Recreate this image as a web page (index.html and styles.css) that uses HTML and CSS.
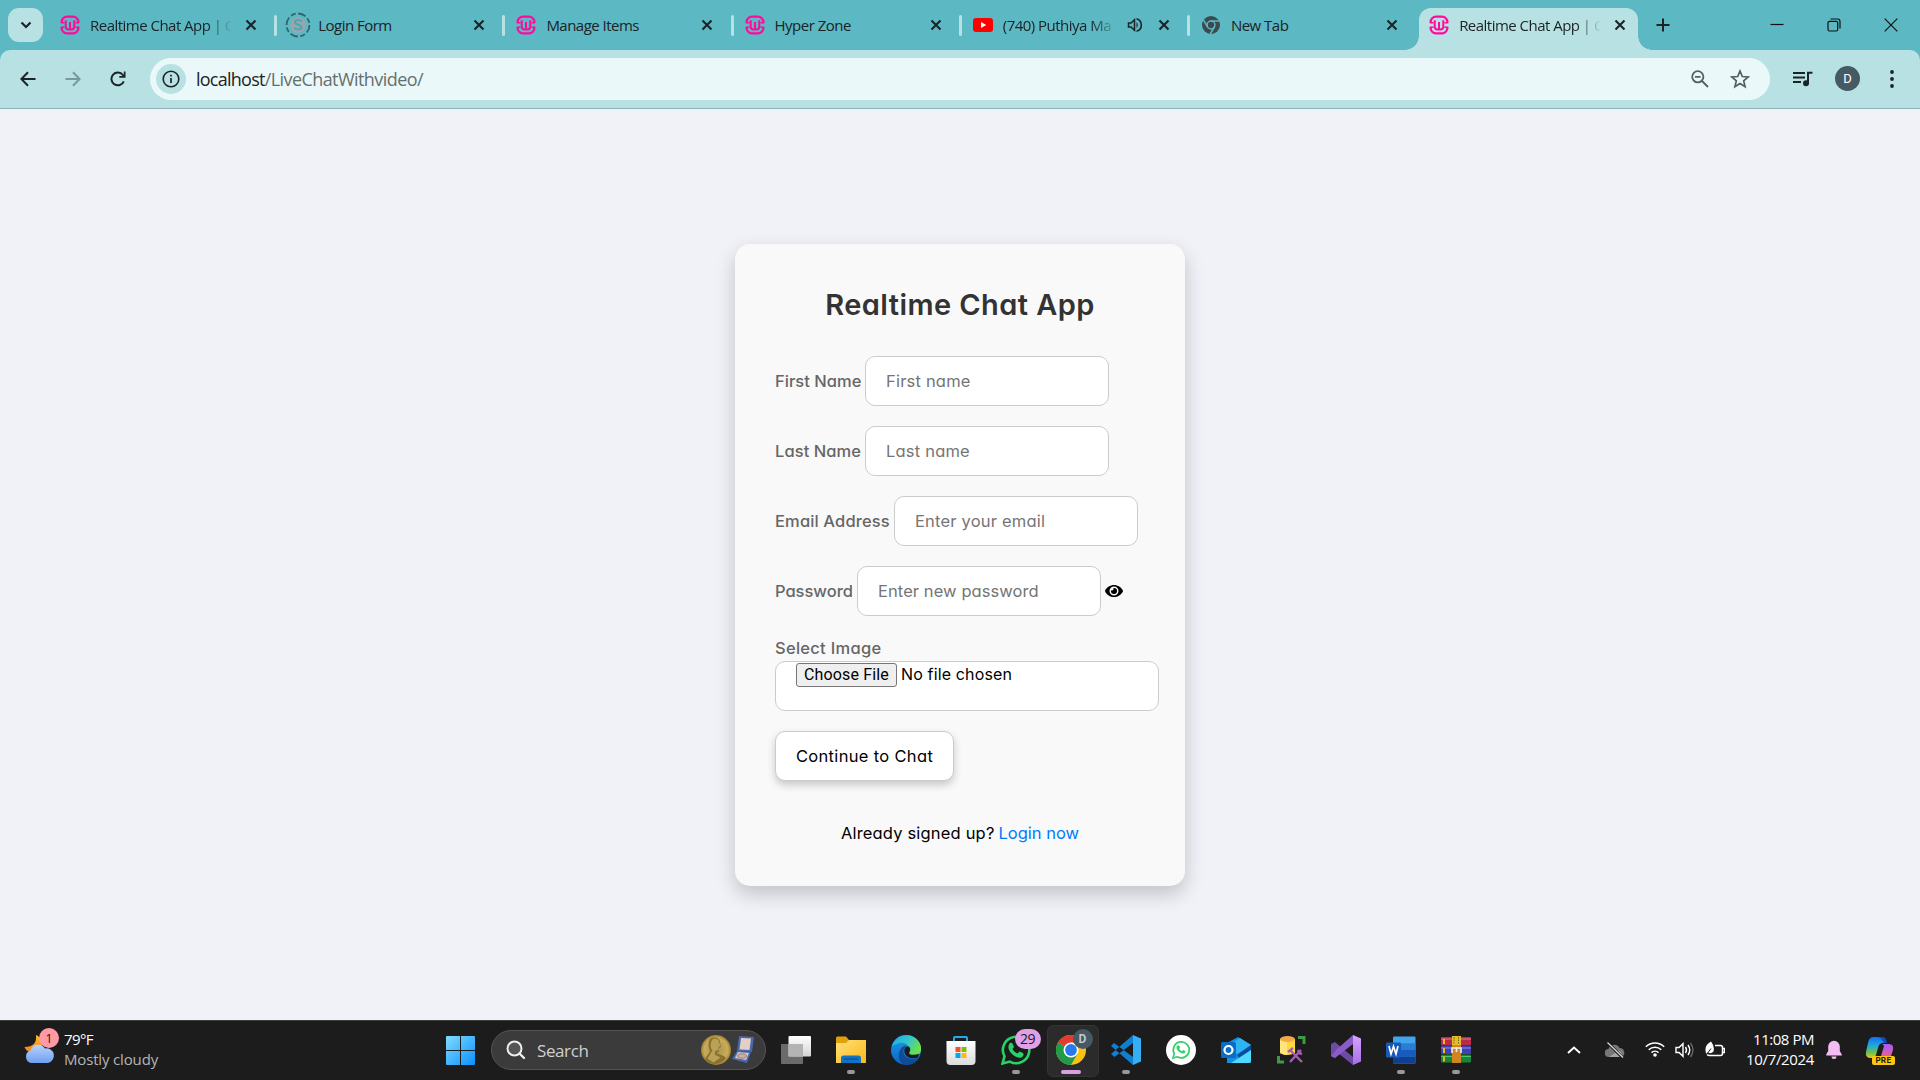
FILE: index.html
```html
<!DOCTYPE html>
<html lang="en">
<head>
<meta charset="utf-8">
<title>Realtime Chat App</title>
<link rel="stylesheet" href="styles.css">
</head>
<body>
<svg class="defs" aria-hidden="true">
  <defs>
    <symbol id="wamp" viewBox="0 0 20 20">
      <path d="M1.600 8.200V7a5.400 5.400 0 0 1 5.400-5.400h6A5.400 5.400 0 0 1 18.400 7v1.200M1.600 11.800V13A5.400 5.400 0 0 0 7 18.400h6a5.400 5.400 0 0 0 5.400-5.400v-1.200" fill="none" stroke="#ff0a9c" stroke-width="2.200"/>
      <path d="M1.500 7.800h3M15.500 7.800h3M1.500 12.200h3M15.500 12.200h3" stroke="#ff0a9c" stroke-width="1.400"/>
      <path d="M5.700 5.200v6.300a3 3 0 0 0 3 3h2.600a3 3 0 0 0 3-3V5.200M10 7v7" fill="none" stroke="#ff0a9c" stroke-width="2"/>
    </symbol>
    <symbol id="x" viewBox="0 0 16 16"><path d="M3.500 3.500l9 9M12.500 3.500l-9 9" stroke="#1b2327" stroke-width="2.100"/></symbol>
    <linearGradient id="gWin" x1="0" y1="0" x2="1" y2="1"><stop offset="0" stop-color="#7fdcff"/><stop offset="1" stop-color="#0a8fff"/></linearGradient>
    <linearGradient id="gCloud" x1="0" y1="0" x2="0" y2="1"><stop offset="0" stop-color="#b9d3fb"/><stop offset="1" stop-color="#6f9ff0"/></linearGradient>
    <linearGradient id="gMoon" x1="0" y1="0" x2="0" y2="1"><stop offset="0" stop-color="#ffc21c"/><stop offset="1" stop-color="#f5792a"/></linearGradient>
    <linearGradient id="gTask" x1="0" y1="0" x2="0" y2="1"><stop offset="0" stop-color="#fff"/><stop offset="1" stop-color="#d5d5d5"/></linearGradient>
    <linearGradient id="gFold" x1="0" y1="0" x2="1" y2="1"><stop offset="0" stop-color="#ffe07a"/><stop offset="1" stop-color="#fbb816"/></linearGradient>
    <linearGradient id="gEdge1" x1="0" y1="0" x2="1" y2="0.500"><stop offset="0" stop-color="#1aa7e8"/><stop offset="0.550" stop-color="#35c6c9"/><stop offset="1" stop-color="#6ae04a"/></linearGradient>
    <linearGradient id="gEdge2" x1="0" y1="0" x2="0" y2="1"><stop offset="0" stop-color="#1d9fe6"/><stop offset="1" stop-color="#0b62c4"/></linearGradient>
    <linearGradient id="gStore" x1="0" y1="0" x2="0" y2="1"><stop offset="0" stop-color="#fff"/><stop offset="1" stop-color="#dcdcdc"/></linearGradient>
    <linearGradient id="gVs" x1="0" y1="0" x2="0" y2="1"><stop offset="0" stop-color="#d9a3ff"/><stop offset="1" stop-color="#a66ee8"/></linearGradient>
    <linearGradient id="gCop1" x1="0" y1="0" x2="0" y2="1"><stop offset="0" stop-color="#1a6bf0"/><stop offset="0.400" stop-color="#1aa9dd"/><stop offset="0.750" stop-color="#6fc04b"/><stop offset="1" stop-color="#f3c41b"/></linearGradient>
    <linearGradient id="gCop2" x1="0" y1="0" x2="0" y2="1"><stop offset="0" stop-color="#a45cf5"/><stop offset="1" stop-color="#f7617d"/></linearGradient>
    <radialGradient id="gCoin"><stop offset="0" stop-color="#a9924a"/><stop offset="0.800" stop-color="#c7ac5a"/><stop offset="1" stop-color="#9b7d2c"/></radialGradient>
  </defs>
</svg>

<div class="screen">
  <header class="tabs">
    <div class="tab-search"><svg width="12" height="12" viewBox="0 0 12 12"><path d="M1.500 3.500L6 8l4.500-4.500" fill="none" stroke="#1b2327" stroke-width="2.200"/></svg></div>
    <div class="tab"><svg class="fav"><use href="#wamp"/></svg><span class="title fade">Realtime Chat App | C</span><svg class="close"><use href="#x"/></svg></div>
    <div class="tab"><svg class="fav big" viewBox="0 0 26 26"><circle cx="13" cy="13" r="11.500" fill="none" stroke="#2f6670" stroke-width="1.800" stroke-dasharray="8 2.500 5 2.500"/><circle cx="13" cy="13" r="7.800" fill="#9aa6ab"/><path d="M17 9.500c-2-2-7-2-7 .8 0 3 6.500 2 6.500 5 0 2.600-5 2.600-7.200.6" fill="none" stroke="#46a9b8" stroke-width="2"/></svg><span class="title">Login Form</span><svg class="close"><use href="#x"/></svg></div>
    <div class="tab"><svg class="fav"><use href="#wamp"/></svg><span class="title">Manage Items</span><svg class="close"><use href="#x"/></svg></div>
    <div class="tab"><svg class="fav"><use href="#wamp"/></svg><span class="title">Hyper Zone</span><svg class="close"><use href="#x"/></svg></div>
    <div class="tab"><svg class="fav" viewBox="0 0 20 20"><rect y="3" width="20" height="14" rx="3" fill="#f00"/><path d="M8 7l5.200 3L8 13z" fill="#fff"/></svg><span class="title fade audio">(740) Puthiya Ma</span><svg class="speaker" viewBox="0 0 16 16"><path d="M1.500 6v4H4l3.500 3.300V2.700L4 6z" fill="none" stroke="#1b2327" stroke-width="1.500"/><path d="M9.500 5q2.500 3 0 6" fill="#1b2327"/><path d="M9.500 1.800a6.400 6.400 0 0 1 0 12.400" fill="none" stroke="#1b2327" stroke-width="1.600"/></svg><svg class="close"><use href="#x"/></svg></div>
    <div class="tab last"><svg class="fav" viewBox="0 0 20 20"><circle cx="10" cy="10" r="9" fill="#3c4a50"/><circle cx="10" cy="10" r="3.900" fill="none" stroke="#5cb8c2" stroke-width="1.500"/><path d="M10 6h8.500M6.600 12L2.300 4.700M13.400 12L9.200 19" stroke="#5cb8c2" stroke-width="1.500"/></svg><span class="title">New Tab</span><svg class="close"><use href="#x"/></svg></div>
    <div class="tab active"><svg class="fav"><use href="#wamp"/></svg><span class="title fade">Realtime Chat App | C</span><svg class="close"><use href="#x"/></svg></div>
    <svg class="plus" viewBox="0 0 14 14"><path d="M7 .5v13M.5 7h13" stroke="#1b2327" stroke-width="2"/></svg>
    <div class="win">
      <svg viewBox="0 0 14 14"><path d="M.5 6.500h13" stroke="#111" stroke-width="1.200"/></svg>
      <svg viewBox="0 0 14 14"><rect x="1" y="3.300" width="9.700" height="9.700" rx="1.500" fill="none" stroke="#111" stroke-width="1.200"/><path d="M3.500 1h7q2.500 0 2.500 2.500v7" fill="none" stroke="#111" stroke-width="1.200"/></svg>
      <svg viewBox="0 0 14 14"><path d="M.7.7l12.600 12.600M13.300.7L.7 13.300" stroke="#111" stroke-width="1.200"/></svg>
    </div>
  </header>

  <div class="toolbar-wrap">
  <nav class="toolbar">
    <div class="nav">
      <svg viewBox="0 0 16 16"><path d="M15.500 8H2M8 1.200L1.400 8 8 14.800" fill="none" stroke="#1b2327" stroke-width="2"/></svg>
      <svg viewBox="0 0 16 16"><path d="M.5 8H14M8 1.200L14.600 8 8 14.800" fill="none" stroke="#7a999e" stroke-width="2"/></svg>
      <svg viewBox="0 0 16 16"><path d="M13.800 10.300A6.400 6.400 0 1 1 12.900 4L14 5.500" fill="none" stroke="#1b2327" stroke-width="2"/><path d="M15.500.5v6.200H9.300V5h4.500V.5z" fill="#1b2327"/></svg>
    </div>
    <div class="omnibox">
      <div class="site"><svg viewBox="0 0 18 18"><circle cx="9" cy="9" r="7.800" fill="none" stroke="#1b2327" stroke-width="1.600"/><path d="M9 8v5M9 4.800v1.800" stroke="#1b2327" stroke-width="1.700"/></svg></div>
      <div class="url"><span class="host">localhost</span><span class="path">/LiveChatWithvideo/</span></div>
      <svg class="zoomi" viewBox="0 0 18 18"><circle cx="6.800" cy="6.800" r="5.600" fill="none" stroke="#555f61" stroke-width="1.800"/><path d="M11 11l6 6M4 6.800h5.600" stroke="#555f61" stroke-width="1.800"/></svg>
      <svg class="star" viewBox="0 0 20 20"><path d="M10 2l2.300 5.500 5.900.5-4.500 3.900 1.400 5.800L10 14.600l-5.100 3.100 1.400-5.800L1.800 8l5.900-.5z" fill="none" stroke="#555f61" stroke-width="1.700"/></svg>
    </div>
    <svg class="music" viewBox="0 0 20 16"><path d="M0 2h12M0 6.500h12M0 11h8" stroke="#1b2327" stroke-width="2"/><path d="M15 12.500V1.800h4.500" fill="none" stroke="#1b2327" stroke-width="2"/><circle cx="13" cy="12.300" r="3" fill="#1b2327"/></svg>
    <div class="avatar">D</div>
    <svg class="dots" viewBox="0 0 4 18"><circle cx="2" cy="2" r="1.900"/><circle cx="2" cy="9" r="1.900"/><circle cx="2" cy="16" r="1.900"/></svg>
  </nav>
  </div>

  <main class="page">
    <section class="card">
      <h1>Realtime Chat App</h1>
      <div class="field"><label class="w-first">First Name</label><input type="text" placeholder="First name"></div>
      <div class="field"><label class="w-last">Last Name</label><input type="text" placeholder="Last name"></div>
      <div class="field"><label class="w-email">Email Address</label><input type="text" placeholder="Enter your email"></div>
      <div class="field"><label class="w-pass">Password</label><input class="pw" type="text" placeholder="Enter new password"><svg class="eye" viewBox="0 0 576 512"><path d="M572.500 241.400C518.300 135.600 410.900 64 288 64S57.700 135.600 3.500 241.400a32.300 32.300 0 0 0 0 29.200C57.700 376.400 165.100 448 288 448s230.300-71.600 284.500-177.400a32.300 32.300 0 0 0 0-29.200zM288 400a144 144 0 1 1 144-144 143.900 143.900 0 0 1-144 144zm0-240a95.300 95.300 0 0 0-25.300 3.800 47.900 47.900 0 0 1-66.900 66.900A95.800 95.800 0 1 0 288 160z"/></svg></div>
      <div class="image"><label class="w-img">Select Image</label><div class="file"><span class="choose">Choose File</span><span class="none">No file chosen</span></div></div>
      <button class="go">Continue to Chat</button>
      <p class="foot"><span class="q">Already signed up?</span><a>Login now</a></p>
    </section>
  </main>

  <footer class="bar">
    <div class="weather">
      <div class="wicon"><svg width="32" height="32" viewBox="0 0 32 32"><path d="M12 3c1 8-3 12-11.500 12C4 24 18 21 18 12c0-4-3-8-6-9z" fill="url(#gMoon)"/><path d="M7 31a6.500 6.500 0 0 1-.5-12.500A8 8 0 0 1 21 16.500a7 7 0 0 1 3 14.500z" fill="url(#gCloud)"/></svg><span class="wbadge">1</span></div>
      <div class="wtext"><span class="temp">79°F</span><span class="cond">Mostly cloudy</span></div>
    </div>
    <div class="dock">
      <svg class="start" viewBox="0 0 29 29"><path d="M1 0h13v14H0V1q0-1 1-1zM15 0h13q1 0 1 1v13H15zM0 15h14v14H1q-1 0-1-1zM15 15h14v13q0 1-1 1H15z" fill="url(#gWin)"/></svg>
      <div class="search">
        <svg class="mag" viewBox="0 0 20 20"><circle cx="8.500" cy="8.500" r="7" fill="#555" stroke="#eee" stroke-width="2"/><path d="M13.500 13.500L18 18" stroke="#eee" stroke-width="2.400" stroke-linecap="round"/></svg>
        <span>Search</span>
        <svg class="coin" viewBox="0 0 54 30"><circle cx="15" cy="15" r="15" fill="url(#gCoin)"/><path d="M9 4c4-3 10-1 10 3l1 5-2 1v4l-3 1c5 2 9 3 10 5-3 4-7 6-11 6-4 0-8-2-10-5 2-4 4-5 5-8-2-4-2-9 0-12z" fill="#8a7130"/><path d="M12 4c3-1 6 0 6 3l1.500 4-2 1v3.500h-3l-1 4 6 3-7 5-6-4 5-8c-3-3-2-9 .5-11.500z" fill="#d9c173" opacity=".6"/><path d="M38 1l15 1-2 15-15-1z" fill="#4a68ad"/><path d="M40 3l10 .6-1.500 11.500-10-.6z" fill="#e3cfc6"/><path d="M36 16l14 1-4 11-15-4z" fill="#4a68ad"/><path d="M37 17l11 1-3 7-11-2z" fill="#dcc8c2"/><ellipse cx="41" cy="21" rx="4.500" ry="2.200" fill="#c7b0a5" stroke="#877470" stroke-width=".8"/></svg>
      </div>
      <div class="app"><svg viewBox="0 0 30 30"><path d="M0 9h22v19q0 1-1 1H1q-1 0-1-1z" fill="#6b6b6b"/><rect x="7.500" y="1" width="22.500" height="20.500" rx="1" fill="url(#gTask)"/><path d="M7.500 9H22v12.500H7.500z" fill="#b4b4b4"/></svg></div>
      <div class="app run"><svg viewBox="0 0 30 30"><path d="M0 3q0-1.500 1.500-1.500H10l3 3.500v6H0z" fill="#e0a20c"/><path d="M0 8h10l3-3h17v23H0z" fill="url(#gFold)"/><path d="M5 28v-5q0-2.500 2.500-2.500h15Q25 20.500 25 23v5z" fill="#1273c4"/><path d="M8 24h14" stroke="#08508f" stroke-width="1.200"/></svg></div>
      <div class="app"><svg viewBox="0 0 30 30"><circle cx="15" cy="15" r="15" fill="url(#gEdge2)"/><path d="M1 11C4 2 12-1 19 .5c8 2 12 9 11 15-1 5-7 6-12 4-1-.6-.5-1.500.3-3C20 11 14 7 9 8c-4 .6-7 3-8 3z" fill="url(#gEdge1)"/><path d="M9 17c0 7 7 13 17 8l2-1.500C24 29 19 30.500 14 29.900 8 28 6 20 9.500 14.500c1-2 3-4 6-4-4 3-4 8-1 11 4 3.500 9 3.500 12.500 1l-.5 3C20 30 9 27 9 17z" fill="#124a96"/><path d="M13.500 14c1-3 4-3 5.500-1 1 2-1 4-.8 5.500.5 1.500 5 1.800 9.800.5l-1 3.500c-7 2.500-15-1-13.500-8.500z" fill="#1c1c1c"/></svg></div>
      <div class="app"><svg viewBox="0 0 30 30"><path d="M8 8V3q0-1 1-1h11q1 0 1 1v5" fill="none" stroke="#28a8ea" stroke-width="2"/><path d="M.5 6h29v20q0 4-4 4h-21q-4 0-4-4z" fill="url(#gStore)"/><path d="M9.500 12h5v5h-5z" fill="#f35325"/><path d="M15.500 12h5v5h-5z" fill="#81bc06"/><path d="M9.500 18h5v5h-5z" fill="#05a6f0"/><path d="M15.500 18h5v5h-5z" fill="#ffba08"/></svg></div>
      <div class="app run"><svg viewBox="0 0 30 30"><path d="M1.500 28.500l2-7.200A13.200 13.200 0 1 1 8.800 26.600z" fill="none" stroke="#25d366" stroke-width="2.600"/><path d="M9 8c2-1 2.500 0 4 4l-1.500 2c1 2 3 3.500 5 4.500l2-2c3 1 4.500 2 4 3.500-1 3-4 3.500-7 2C11 20 8 16 7.500 13c-.3-2 .5-4 1.500-5z" fill="#25d366"/></svg><span class="badge">29</span></div>
      <div class="app on"><svg viewBox="0 0 30 30"><circle cx="15" cy="15" r="15" fill="#fbc116"/><path d="M15 15L2 7.500A15 15 0 0 1 28 7.500H15z" fill="#e33b2e"/><path d="M2 7.500A15 15 0 0 0 15 30l6.500-11.200L15 15z" fill="#229a4b"/><circle cx="15" cy="15" r="7.500" fill="#fff"/><circle cx="15" cy="15" r="5.900" fill="#2879ee"/></svg><span class="prof">D</span></div>
      <div class="app run"><svg viewBox="0 0 30 30"><path d="M22 0l8 3.500v23L22 30z" fill="#35aef5"/><path d="M0 19l3.500 3L22 8V0zM0 11l3-3 19 14v8z" fill="#0f7fd0"/></svg></div>
      <div class="app"><svg viewBox="0 0 30 30"><circle cx="15" cy="15" r="15" fill="#fff"/><path d="M7 23l1.200-4.400A8 8 0 1 1 11.300 21.800z" fill="none" stroke="#35cf6c" stroke-width="1.700"/><path d="M11.800 10.500c1.200-.6 1.500 0 2.200 2l-.8 1.200c.6 1.200 1.500 2 2.700 2.500l1.200-1.100c1.800.6 2.500 1 2.200 2-.6 1.500-2.200 1.900-4 1-3-1.500-5-4-4.800-5.700 0-.8.600-1.500 1.300-1.900z" fill="#35cf6c"/></svg></div>
      <div class="app"><svg viewBox="0 0 30 30"><path d="M6 8L17 2l13 8v18H6z" fill="#1490df"/><path d="M8 10l11-7 11 7-14 9z" fill="#2fb4f3"/><path d="M16 20l14-10v5L19 24z" fill="#0a4ba0"/><path d="M10 28l20-13v10q0 3-3 3z" fill="#50d9ff"/><rect y="7" width="15" height="16" rx="1.500" fill="#0a6cc8"/><circle cx="7.500" cy="15" r="4" fill="none" stroke="#fff" stroke-width="2.200"/></svg></div>
      <div class="app"><svg viewBox="0 0 30 30"><path d="M4 4v14q7 4 15 0V4z" fill="#ffd83a"/><path d="M4 4v14q3 2 7 2V5z" fill="#ffe67a"/><ellipse cx="11.500" cy="4" rx="7.500" ry="3" fill="#f3a84a"/><path d="M22 2.500h6V9M8 27H2.500v-6" fill="none" stroke="#3f9a46" stroke-width="3"/><path d="M14 15l12 12M25 15L14 27M12 17l5-4M22 15l1 3 3 1" fill="none" stroke="#a45bbd" stroke-width="2.400"/></svg></div>
      <div class="app"><svg viewBox="0 0 30 30"><path d="M0 9l4-2 18 15v8L4.500 16 4 23l-4-2z" fill="#6d49a8"/><path d="M4 23l-4-2 5-6L22 0v9z" fill="#8a5cc7"/><path d="M22 0l8 3.500v23L22 30z" fill="url(#gVs)"/></svg></div>
      <div class="app run"><svg viewBox="0 0 30 30"><rect x="7" y="1.500" width="22.500" height="27" rx="1" fill="#41a5ee"/><path d="M7 8.300h22.500V15H7z" fill="#2b7cd3"/><path d="M7 15h22.500v6.700H7z" fill="#185abd"/><path d="M7 21.700h22.500v6.800H7z" fill="#103f91"/><rect y="7.500" width="15" height="15" rx="1.200" fill="#1658bb"/><path d="M3 11l2 8 2.500-7.500L10 19l2-8" fill="none" stroke="#fff" stroke-width="1.700"/></svg></div>
      <div class="app run"><svg viewBox="0 0 30 30"><rect y="2" width="30" height="8.500" rx="1" fill="#b82c48"/><path d="M0 4h30" stroke="#e4788b"/><rect y="11" width="30" height="8" rx="1" fill="#4040b5"/><path d="M0 13h30" stroke="#8b8be6"/><rect y="19.500" width="30" height="8" rx="1" fill="#14863c"/><path d="M0 21.500h30" stroke="#4fc46e"/><path d="M3 4v5M3 13v5M3 21.500v5" stroke="#f4b41a" stroke-width="2"/><path d="M11 1h9v27h-9z" fill="#d08522"/><path d="M11 1h9v9h-9z" fill="#e3bf2b"/><path d="M13 2v7M17.500 2v7" stroke="#7d5b10" stroke-dasharray="1.500 1"/><path d="M11 18v-5h9v5M15.500 12v5" fill="none" stroke="#eee" stroke-width="1.600"/></svg></div>
    </div>
    <div class="tray">
      <svg class="t-chev" viewBox="0 0 14 8"><path d="M1 7l6-5.500L13 7" fill="none" stroke="#fff" stroke-width="1.900"/></svg>
      <svg class="t-cloud" viewBox="0 0 20 16"><path d="M4 15a4 4 0 0 1-.5-8A6 6 0 0 1 14.500 6 4.600 4.600 0 0 1 16 15z" fill="#777"/><path d="M4 15l10-6.500A4.500 4.500 0 0 1 16 15z" fill="#a5a5a5"/><path d="M3 1l15 15" stroke="#1c1c1c" stroke-width="3"/><path d="M2.500.5L18 15.500" stroke="#ddd" stroke-width="1.200"/></svg>
      <svg class="t-wifi" viewBox="0 0 20 16"><path d="M.8 5.800a13 13 0 0 1 18.400 0M3.700 8.800a9 9 0 0 1 12.600 0M6.500 11.600a5 5 0 0 1 7 0" fill="none" stroke="#fff" stroke-width="1.500"/><circle cx="10" cy="14" r="1.800" fill="#fff"/></svg>
      <svg class="t-vol" viewBox="0 0 20 16"><path d="M1 5.500v5h3l4 3.800V1.700L4 5.500z" fill="none" stroke="#fff" stroke-width="1.400"/><path d="M10.500 5q2 3 0 6M13 3q3.500 5 0 10" fill="none" stroke="#fff" stroke-width="1.400"/><path d="M15.500 1q5 7 0 14" fill="none" stroke="#666" stroke-width="1.400"/></svg>
      <svg class="t-bat" viewBox="0 0 20 16"><path d="M10 4h5.500Q17.500 4 17.500 6v6q0 2-2 2H4.500Q2 14 2 12M18 7h1.500v4H18" fill="none" stroke="#fff" stroke-width="1.500"/><path d="M1 12C-.5 6 1 3 6 0q4 5 2.500 10Q6 13 2.500 11z" fill="#fff"/><path d="M1 14L6 7" stroke="#1c1c1c"/></svg>
      <div class="clock"><span class="time">11:08 PM</span><span class="date">10/7/2024</span></div>
      <svg class="t-bell" viewBox="0 0 16 20"><path d="M8 .8a5.800 5.800 0 0 1 5.800 5.800V11l2 3.600v.9H.2v-.9l2-3.600V6.600A5.800 5.800 0 0 1 8 .8zM5.500 16.600h5a2.500 2.500 0 0 1-5 0z" fill="#f1bdf3"/></svg>
      <div class="cop"><svg width="30" height="26" viewBox="0 0 30 26"><path d="M8 1h9q3 0 4 6h-3q-4 0-5 5l-2 7q-1 3-5 3-6 0-5-6L3 7q1-6 5-6z" fill="url(#gCop1)"/><path d="M17 8h7q5 0 4 6l-2 6q-1 4-5 4H12q3 0 4-4l3-10q-1-2-2-2z" fill="url(#gCop2)"/><path d="M12 1h6q3 0 4 6h-3q-3-6-7-6z" fill="#1649b8"/></svg><span class="pre">PRE</span></div>
    </div>
  </footer>
</div>
</body>
</html>
```
FILE: styles.css
```css
*{box-sizing:border-box}
body{margin:0;overflow:hidden;font-family:"Open Sans","Noto Sans",sans-serif;color:#1b2327}
svg{display:block;flex:none}
.defs{position:absolute;width:0;height:0}
.screen{width:1920px;height:1080px;display:flex;flex-direction:column}

/* Tab strip */
.tabs{height:50px;background:#5cb8c2;display:flex;padding-left:8px;flex:none}
.tab-search{width:35px;height:34px;margin:8px 3px 0 0;border-radius:11px;background:#b8e1e4;display:flex;align-items:center;justify-content:center}
.tab{width:228.200px;height:50px;display:flex;align-items:center;padding-left:14px;position:relative;flex:none}
.tab:not(.active):not(.last)::after{content:"";position:absolute;right:-3px;top:15px;width:3px;height:21px;border-radius:2px;background:#b8e1e4}
.fav{width:20px;height:20px;margin-right:10px}
.fav.big{width:26px;height:26px;margin:0 7px 0 -3px}
.title{width:146px;font-size:15px;letter-spacing:-.52px;white-space:nowrap;overflow:hidden;line-height:24px;margin-top:-1px}
.title.fade{-webkit-mask-image:linear-gradient(90deg,#000 118px,transparent 142px);mask-image:linear-gradient(90deg,#000 118px,transparent 142px)}
.title.audio{width:115px;-webkit-mask-image:linear-gradient(90deg,#000 88px,transparent 114px);mask-image:linear-gradient(90deg,#000 88px,transparent 114px)}
.speaker{width:16px;height:16px;margin:0 6px 0 9px}
.close{width:16px;height:16px;margin-left:7px}
.tab.active{height:42.500px;margin-top:7.500px;padding-bottom:7.500px;background:#b8e1e4;border-radius:12px 12px 0 0;width:219px;margin-left:4px;padding-left:10px}
.tab.active::before,.tab.active::after{content:"";position:absolute;bottom:0;width:14px;height:14px}
.tab.active::before{left:-14px;background:radial-gradient(circle at 0 0,transparent 13.500px,#b8e1e4 14px)}
.tab.active::after{right:-14px;background:radial-gradient(circle at 100% 0,transparent 13.500px,#b8e1e4 14px)}
.plus{width:14px;height:14px;margin:18px 0 0 18px}
.win{display:flex;gap:43px;margin:18px 22px 0 auto}
.win svg{width:14px;height:14px}

/* Toolbar */
.toolbar-wrap{background:#5cb8c2;flex:none}
.toolbar{height:59px;background:#b8e1e4;border-bottom:1px solid #8fb3b8;border-radius:10px 10px 0 0;display:flex;align-items:center;padding:0 26px 1px 20px}
.nav{display:flex;gap:29px;margin-right:24px}
.nav svg{width:16px;height:16px}
.omnibox{width:1620px;height:42px;border-radius:21px;background:#ebf8f9;display:flex;align-items:center;padding:0 20px 0 6px}
.site{width:30px;height:30px;border-radius:50%;background:#b8e1e4;display:flex;align-items:center;justify-content:center}
.site svg{width:18px;height:18px}
.url{margin-left:10px;font-size:18px;line-height:28px;flex:1}
.host{letter-spacing:-.75px}
.path{letter-spacing:-.57px;color:#64706f}
.zoomi{width:18px;height:18px;margin-right:21px}
.star{width:20px;height:20px}
.music{width:20px;height:16px;margin:0 22px 0 23px}
.avatar{width:25px;height:25px;border-radius:50%;background:#455a64;color:#fff;font:13px/25px Roboto,sans-serif;text-align:center;margin-right:30px}
.dots{width:4px;height:18px;fill:#1b2327}

/* Page and sign-up card */
.page{height:911px;background:#f0f2f7;display:flex;justify-content:center;align-items:flex-start;padding-top:135px;flex:none;font-family:Inter,sans-serif;font-feature-settings:"cv11"}
.card{width:450px;height:642px;border-radius:15px;background:#f9f9f9;box-shadow:0 8px 20px rgba(0,0,0,.2);padding:40px;display:flex;flex-direction:column;align-items:flex-start}
h1{margin:0 0 30px;width:370px;height:42px;text-align:center;font-size:29px;line-height:41px;font-weight:600;letter-spacing:.43px;color:#333;white-space:nowrap}
.field{display:flex;align-items:center;height:50px;margin-bottom:20px}
label{font-size:16.500px;font-weight:500;color:#666;white-space:nowrap}
.w-first{width:90px;letter-spacing:.02px}
.w-last{width:90px;letter-spacing:.07px}
.w-email{width:119px;letter-spacing:.14px}
.w-pass{width:82px;letter-spacing:-.03px}
.w-img{letter-spacing:.28px;line-height:25px;height:25px;display:block}
input{width:244px;height:50px;border:1px solid #ccc;border-radius:10px;background:#fff;padding:0 20px;font:400 16.500px Inter,sans-serif;font-feature-settings:"cv11";letter-spacing:.2px;outline:none}
input::placeholder{color:#757575}
.pw{letter-spacing:.08px}
.eye{width:18px;height:16px;margin:-1px 0 0 4px}
.image{margin-bottom:20px}
.file{width:384px;height:50px;border:1px solid #ccc;border-radius:10px;background:#fff;padding:1px 20px;display:flex;gap:4px;color:#000;font-size:16px;line-height:23px}
.choose{width:101px;height:24px;border:1px solid #767676;border-radius:3px;background:#efefef;text-align:center;font:16px/22px Roboto,sans-serif;letter-spacing:.15px;white-space:nowrap}
.none{letter-spacing:.14px}
.go{width:179px;height:50px;border:1px solid #ccc;border-radius:10px;background:#fff;box-shadow:0 4px 8px rgba(0,0,0,.2);font:400 16.500px Inter,sans-serif;font-feature-settings:"cv11";letter-spacing:.33px;padding:0;color:#000;white-space:nowrap}
.foot{margin:40px 0 0;width:370px;display:flex;justify-content:center;gap:4px;font-size:16.500px;line-height:24px;color:#000}
.q{letter-spacing:.18px}
.foot a{letter-spacing:0;color:#007bff}

/* Taskbar */
.bar{height:60px;background:#1c1c1c;border-top:1px solid #3c3f3c;display:flex;position:relative;flex:none;color:#fff}
.weather{display:flex;width:446px;padding:8px 0 0 24px}
.wicon{width:40px;position:relative;padding-top:3px}
.wbadge{position:absolute;left:15px;top:-1px;width:20px;height:20px;border-radius:50%;background:#ff99a4;color:#1c1c1c;font-size:13px;line-height:20px;text-align:center}
.wtext{display:flex;flex-direction:column;font-size:15px;line-height:20px}
.temp{letter-spacing:-.58px}
.cond{letter-spacing:-.16px;color:#b5b5b5}
.dock{display:flex;align-items:flex-start}
.start{width:29px;height:29px;margin:15px 16px 0 0}
.search{width:275px;height:40px;margin:9px 2.500px 0 0;border-radius:20px;background:#3b3b3b;border:1px solid #545454;display:flex;align-items:center;padding:0 10px 0 14px}
.mag{width:20px;height:20px}
.search span{margin:1px 0 0 11px;font-size:17px;letter-spacing:-.4px;color:#d0d0d0;flex:1;line-height:24px}
.coin{width:54px;height:30px}
.app{width:55px;height:59px;padding:14px 12.500px 0;position:relative}
.app svg{width:30px;height:30px}
.run::after{content:"";position:absolute;left:23.500px;top:49px;width:8px;height:4px;border-radius:2px;background:#999}
.on::before{content:"";position:absolute;left:3px;top:4px;width:50px;height:50px;border-radius:6px;background:#2b2b2b;border:1px solid #343434}
.on svg{position:relative}
.on::after{content:"";position:absolute;left:17.500px;top:49px;width:20px;height:4px;border-radius:2px;background:#dc9fe4}
.badge{position:absolute;left:26px;top:8px;width:26px;height:20px;border-radius:10px;background:#dfa0e6;color:#1c1c1c;font-size:14px;letter-spacing:-.5px;line-height:20px;text-align:center}
.prof{position:absolute;left:29px;top:8px;width:20px;height:20px;border-radius:50%;background:#455a64;color:#c8ccd0;font:600 12px/20px Roboto,sans-serif;text-align:center}
.tray{margin-left:auto;display:flex;align-items:flex-start;padding-right:25px}
.t-chev{width:14px;height:8px;margin:25px 24px 0 0}
.t-cloud{width:20px;height:16px;margin:21px 20px 0 0}
.t-wifi{width:20px;height:16px;margin:20px 10px 0 0}
.t-vol{width:20px;height:16px;margin:21px 10px 0 0}
.t-bat{width:20px;height:17px;margin:20px 19px 0 0}
.clock{width:70px;margin-top:8px;display:flex;flex-direction:column;align-items:flex-end;font-size:15px;line-height:20px;white-space:nowrap}
.time{letter-spacing:-.46px}
.date{letter-spacing:-.34px}
.t-bell{width:16px;height:20px;margin:19px 23px 0 12px}
.cop{width:30px;position:relative;padding-top:15px}
.pre{position:absolute;left:7px;top:35px;width:23px;height:9px;border-radius:2px;background:#ffc60a;color:#1c1c1c;font:700 8px/9px Inter,sans-serif;letter-spacing:.3px;text-align:center}
```
